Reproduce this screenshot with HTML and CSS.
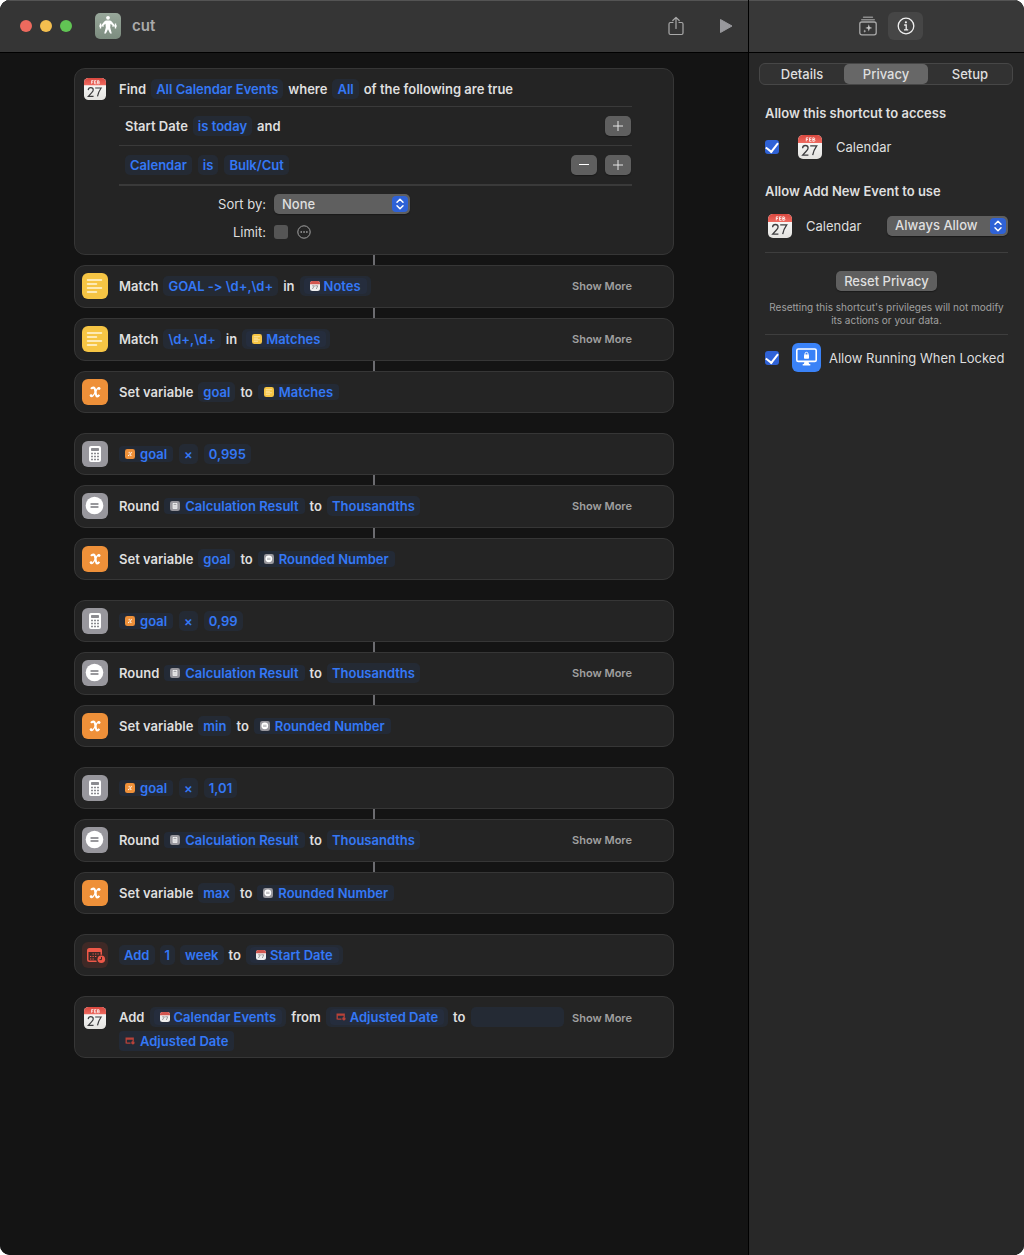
FILE: index.html
```html
<!DOCTYPE html>
<html lang="en">
<head>
<meta charset="utf-8">
<meta name="viewport" content="width=device-width, initial-scale=1">
<title>cut</title>
<link rel="stylesheet" href="styles.css">
</head>
<body>
<svg class="defs" aria-hidden="true">
  <defs>
    <linearGradient id="paper" x1="0" y1="0" x2="0" y2="1"><stop offset="0" stop-color="#fff"/><stop offset="1" stop-color="#e4e3e0"/></linearGradient>
    <linearGradient id="red" x1="0" y1="0" x2="0" y2="1"><stop offset="0" stop-color="#d9483f"/><stop offset="1" stop-color="#ee6a60"/></linearGradient>
    <linearGradient id="sage" x1="0" y1="0" x2="0" y2="1"><stop offset="0" stop-color="#98a79a"/><stop offset="1" stop-color="#7c8c7f"/></linearGradient>
  </defs>
  <symbol id="calendar" viewBox="0 0 24 24">
    <rect width="24" height="24" rx="5" fill="url(#paper)"/>
    <path d="M0 8V5a5 5 0 0 1 5-5h14a5 5 0 0 1 5 5v3z" fill="url(#red)"/>
    <path d="M8.3 6.3V2.8h2M8.3 4.5h1.7M13.5 2.8h-2v3.5h2M11.5 4.5h1.8M14.8 2.8v3.5h1.2a.9.9 0 0 0 0-1.8h-1.2 1a.8.8 0 0 0 0-1.7z" fill="none" stroke="#fff" stroke-width=".8"/>
    <path d="M4.600 13.200c.1-1.700 1.200-2.700 2.800-2.700 1.500 0 2.700 1 2.700 2.500 0 1.200-.7 2-1.900 3.200l-3.500 3.900h5.700M12.200 10.900h6.500c-2 2.800-3.300 5.500-4 9.200" fill="none" stroke="#3d3d3f" stroke-width="1.300"/>
  </symbol>
  <symbol id="text" viewBox="0 0 26 26">
    <rect width="26" height="26" rx="6" fill="#f6c544"/>
    <path d="M5.500 7h14M5.500 11h9M5.500 15h14M5.500 19h9" stroke="#fff6dc" stroke-width="1.500" stroke-linecap="round"/>
  </symbol>
  <symbol id="variable" viewBox="0 0 26 26">
    <rect width="26" height="26" rx="6" fill="#ee9039"/>
    <path d="M9 9.900c.7-.9 1.500-1.300 2.300-1.300 1.500 0 1.900 1.600 2.200 4.200.3 2.700.5 4.600 1.700 4.600.8 0 1.500-.7 2-1.700" fill="none" stroke="#fff" stroke-width="2.200"/>
    <path d="M17.500 9c-1.300-.9-2.500.8-4 3.800-1.700 3.400-3.300 5.500-4.900 4.400" fill="none" stroke="#fff" stroke-width="1.300"/>
    <circle cx="17.100" cy="9.600" r="1.400" fill="#fff"/><circle cx="9.100" cy="16.600" r="1.400" fill="#fff"/>
  </symbol>
  <symbol id="calculator" viewBox="0 0 26 26">
    <rect width="26" height="26" rx="6" fill="#98979d"/>
    <rect x="7" y="5" width="12" height="16" rx="2" fill="#fff"/>
    <rect x="9" y="7" width="8" height="3" rx=".7" fill="#8b8b90"/>
    <path d="M9 12.500h8M9 15.500h8M9 18.500h2M12 18.500h5" stroke="#8b8b90" stroke-width="1.600" stroke-dasharray="2 1"/>
  </symbol>
  <symbol id="round" viewBox="0 0 26 26">
    <rect width="26" height="26" rx="6" fill="#98979d"/>
    <circle cx="12.500" cy="12.500" r="8.800" fill="#fff"/>
    <path d="M9 11h7M9 14h7" stroke="#77777c" stroke-width="1.300" stroke-linecap="round"/>
  </symbol>
  <symbol id="adjust" viewBox="0 0 26 26">
    <rect width="26" height="26" rx="6" fill="#3f2926"/>
    <path fill-rule="evenodd" d="M7.500 6h10A2.500 2.500 0 0 1 20 8.500v4.200a4.800 4.800 0 0 0-1.500.1V10h-12v7.500a1 1 0 0 0 1 1h6.800q.1.800.5 1.500H7.500A2.500 2.500 0 0 1 5 17.500v-9A2.500 2.500 0 0 1 7.500 6z" fill="#ee5848"/>
    <path d="M10.500 12h7M8 14.500h7.500M8 17h5" stroke="#ee5848" stroke-width="1.200" stroke-dasharray="1.300 1.200"/>
    <circle cx="19.300" cy="17.300" r="3.800" fill="#ee5848"/>
    <path d="M19.500 15v2.600h-2" fill="none" stroke="#3f2926" stroke-width="1"/>
  </symbol>
  <symbol id="mini-calendar" viewBox="0 0 10 10">
    <rect width="10" height="10" rx="2.500" fill="#eee"/><path d="M0 3.200V2.500A2.500 2.500 0 0 1 2.500 0h5A2.500 2.500 0 0 1 10 2.500v.7z" fill="#d2564f"/>
    <path d="M2.200 4.800h2.200L2.400 8M5.300 4.800h2.500L6.300 8" fill="none" stroke="#888" stroke-width=".8"/>
  </symbol>
  <symbol id="mini-adjust" viewBox="0 0 10 10">
    <path d="M1.200 7.500V2.200h7V5M1 3h7M1.500 7.200h4" fill="none" stroke="#b84239" stroke-width="1.300"/><circle cx="7.900" cy="6.800" r="1.700" fill="#b84239"/>
  </symbol>
</svg>

<div class="window">
  <main class="editor">
    <header class="toolbar">
      <div class="lights"><span class="light light-close"></span><span class="light light-min"></span><span class="light light-zoom"></span></div>
      <svg class="app-icon" viewBox="0 0 26 26" aria-hidden="true">
        <rect width="26" height="26" rx="5" fill="url(#sage)"/>
        <circle cx="13" cy="4.800" r="1.900" fill="#fff"/>
        <path d="M10.800 7.500h4.400l1.500 1 3 3.800-1 1-3.200-2.600-.3 3.800 1.600 6h-1.700L13 16.300l-2.100 4.200H9.200l1.600-6-.3-3.800-3.200 2.600-1-1 3-3.800z" fill="#fff"/>
        <path d="M4 13h5M17 13h5" stroke="#fff"/>
        <path d="M5.500 10.500v5M20.500 10.500v5" stroke="#fff" stroke-width="1.400"/>
      </svg>
      <h1 class="title">cut</h1>
      <button class="tool tool-share" aria-label="Share"><svg width="16" height="20" viewBox="0 0 16 20"><path d="M5 6.500H2.500A1.500 1.500 0 0 0 1 8v9a1.500 1.500 0 0 0 1.500 1.500h11A1.500 1.500 0 0 0 15 17V8a1.500 1.500 0 0 0-1.500-1.500H11M8 12.500V1.500M4.800 4.500 8 1.300l3.200 3.200" fill="none" stroke="#a9a9a9" stroke-width="1.200" stroke-linecap="round" stroke-linejoin="round"/></svg></button>
      <button class="tool" aria-label="Run"><svg width="14" height="16" viewBox="0 0 14 16"><path d="M1.500 1.500v13L13 8z" fill="#98989c" stroke="#98989c" stroke-linejoin="round"/></svg></button>
    </header>

    <div class="canvas">
      <section class="card find">
        <svg class="icon icon-calendar"><use href="#calendar"/></svg>
        <div class="find-body">
          <div class="find-head line"><span>Find</span><a href="#" class="pill">All Calendar Events</a><span>where</span><a href="#" class="pill">All</a><span>of the following are true</span></div>
          <div class="filter"><div class="line"><span>Start Date</span><a href="#" class="pill">is today</a><span>and</span></div><button class="push square" aria-label="Add filter"><svg width="12" height="12"><path d="M1 6h10M6 1v10" stroke="#e6e6e6"/></svg></button></div>
          <div class="filter"><div class="line pills"><a href="#" class="pill">Calendar</a><a href="#" class="pill">is</a><a href="#" class="pill">Bulk/Cut</a></div><button class="push square" aria-label="Remove filter"><svg width="12" height="12"><path d="M1 5.500h10" stroke="#fff"/></svg></button><button class="push square" aria-label="Add filter"><svg width="12" height="12"><path d="M1 6h10M6 1v10" stroke="#e6e6e6"/></svg></button></div>
          <div class="options">
            <label for="sort">Sort by:</label>
            <span class="popup"><select id="sort"><option>None</option></select><svg class="stepper" viewBox="0 0 16 16"><path d="m5 6.300 3-3 3 3M5 9.700l3 3 3-3" /></svg></span>
            <label for="limit">Limit:</label>
            <span class="limit"><input type="checkbox" id="limit" class="check"><button class="more" aria-label="More"><svg width="14" height="14" viewBox="0 0 14 14"><circle cx="7" cy="7" r="6.200" fill="none" stroke="#a3a3a3"/><path d="M3.500 7h1.500M6.300 7h1.500M9.100 7h1.500" stroke="#a3a3a3" stroke-width="1.400"/></svg></button></span>
          </div>
        </div>
      </section>
      <i class="link"></i>
      <section class="card tall">
        <svg class="icon"><use href="#text"/></svg>
        <div class="line"><span>Match</span><a href="#" class="pill">GOAL -&gt; \d+,\d+</a><span>in</span><span class="pill nest"><a href="#" class="token"><svg class="mini"><use href="#mini-calendar"/></svg>Notes</a></span></div>
        <button class="show">Show More</button>
      </section>
      <i class="link"></i>
      <section class="card tall">
        <svg class="icon"><use href="#text"/></svg>
        <div class="line"><span>Match</span><a href="#" class="pill">\d+,\d+</a><span>in</span><span class="pill nest"><a href="#" class="token"><svg class="mini"><use href="#text"/></svg>Matches</a></span></div>
        <button class="show">Show More</button>
      </section>
      <i class="link"></i>
      <section class="card">
        <svg class="icon"><use href="#variable"/></svg>
        <div class="line"><span>Set variable</span><a href="#" class="pill">goal</a><span>to</span><a href="#" class="token"><svg class="mini"><use href="#text"/></svg>Matches</a></div>
      </section>

      <section class="card first">
        <svg class="icon"><use href="#calculator"/></svg>
        <div class="line pills"><a href="#" class="token"><svg class="mini"><use href="#variable"/></svg>goal</a><a href="#" class="pill">×</a><a href="#" class="pill">0,995</a></div>
      </section>
      <i class="link"></i>
      <section class="card tall">
        <svg class="icon"><use href="#round"/></svg>
        <div class="line"><span>Round</span><a href="#" class="token"><svg class="mini"><use href="#calculator"/></svg>Calculation Result</a><span>to</span><a href="#" class="pill">Thousandths</a></div>
        <button class="show">Show More</button>
      </section>
      <i class="link"></i>
      <section class="card">
        <svg class="icon"><use href="#variable"/></svg>
        <div class="line"><span>Set variable</span><a href="#" class="pill">goal</a><span>to</span><a href="#" class="token"><svg class="mini"><use href="#round"/></svg>Rounded Number</a></div>
      </section>

      <section class="card first">
        <svg class="icon"><use href="#calculator"/></svg>
        <div class="line pills"><a href="#" class="token"><svg class="mini"><use href="#variable"/></svg>goal</a><a href="#" class="pill">×</a><a href="#" class="pill">0,99</a></div>
      </section>
      <i class="link"></i>
      <section class="card tall">
        <svg class="icon"><use href="#round"/></svg>
        <div class="line"><span>Round</span><a href="#" class="token"><svg class="mini"><use href="#calculator"/></svg>Calculation Result</a><span>to</span><a href="#" class="pill">Thousandths</a></div>
        <button class="show">Show More</button>
      </section>
      <i class="link"></i>
      <section class="card">
        <svg class="icon"><use href="#variable"/></svg>
        <div class="line"><span>Set variable</span><a href="#" class="pill">min</a><span>to</span><a href="#" class="token"><svg class="mini"><use href="#round"/></svg>Rounded Number</a></div>
      </section>

      <section class="card first">
        <svg class="icon"><use href="#calculator"/></svg>
        <div class="line pills"><a href="#" class="token"><svg class="mini"><use href="#variable"/></svg>goal</a><a href="#" class="pill">×</a><a href="#" class="pill">1,01</a></div>
      </section>
      <i class="link"></i>
      <section class="card tall">
        <svg class="icon"><use href="#round"/></svg>
        <div class="line"><span>Round</span><a href="#" class="token"><svg class="mini"><use href="#calculator"/></svg>Calculation Result</a><span>to</span><a href="#" class="pill">Thousandths</a></div>
        <button class="show">Show More</button>
      </section>
      <i class="link"></i>
      <section class="card">
        <svg class="icon"><use href="#variable"/></svg>
        <div class="line"><span>Set variable</span><a href="#" class="pill">max</a><span>to</span><a href="#" class="token"><svg class="mini"><use href="#round"/></svg>Rounded Number</a></div>
      </section>

      <section class="card first">
        <svg class="icon"><use href="#adjust"/></svg>
        <div class="line"><a href="#" class="pill">Add</a><a href="#" class="pill">1</a><a href="#" class="pill">week</a><span>to</span><span class="pill nest"><a href="#" class="token"><svg class="mini"><use href="#mini-calendar"/></svg>Start Date</a></span></div>
      </section>

      <section class="card first double">
        <svg class="icon icon-calendar"><use href="#calendar"/></svg>
        <div class="line wrap"><span>Add</span><span class="pill nest"><a href="#" class="token"><svg class="mini"><use href="#mini-calendar"/></svg>Calendar Events</a></span><span>from</span><span class="pill nest"><a href="#" class="token"><svg class="mini"><use href="#mini-adjust"/></svg>Adjusted Date</a></span><span>to</span><span class="pill rest"></span><a href="#" class="token"><svg class="mini"><use href="#mini-adjust"/></svg>Adjusted Date</a></div>
        <button class="show">Show More</button>
      </section>
    </div>
  </main>

  <aside class="side">
    <header class="toolbar side-bar">
      <button class="tool tool-side" aria-label="Action library"><svg width="18" height="20" viewBox="0 0 18 20"><path d="M4.500 1.200h9M2.700 3.700h12.600" stroke="#8c8c8c" stroke-width="1.400" stroke-linecap="round"/><rect x=".8" y="6" width="16.400" height="12.800" rx="2" fill="none" stroke="#a9a9a9" stroke-width="1.300"/><path d="M9.800 8.300l.9 2.700 2.700.9-2.700.9-.9 2.700-.9-2.700-2.700-.9 2.700-.9zM5.800 13.500l.4 1.200 1.200.4-1.200.4-.4 1.200-.4-1.200-1.200-.4 1.200-.4z" fill="#c5c5c5"/></svg></button>
      <button class="tool tool-side active" aria-label="Details"><svg width="18" height="18" viewBox="0 0 18 18"><circle cx="9" cy="9" r="7.800" fill="none" stroke="#f0f0f0" stroke-width="1.300"/><circle cx="8.900" cy="5.300" r="1.100" fill="#f0f0f0"/><path d="M7.200 8h2v4.700M7 12.800h4.200" fill="none" stroke="#f0f0f0" stroke-width="1.300"/></svg></button>
    </header>
    <nav class="tabs"><button class="tab">Details</button><button class="tab selected">Privacy</button><button class="tab">Setup</button></nav>
    <div class="panel">
      <h2>Allow this shortcut to access</h2>
      <label class="row access"><input type="checkbox" class="check" checked><svg class="cal"><use href="#calendar"/></svg><span>Calendar</span></label>
      <h2>Allow Add New Event to use</h2>
      <div class="row event"><svg class="cal"><use href="#calendar"/></svg><label for="allow">Calendar</label><span class="popup wide"><select id="allow"><option>Always Allow</option></select><svg class="stepper" viewBox="0 0 16 16"><path d="m5 6.300 3-3 3 3M5 9.700l3 3 3-3"/></svg></span></div>
      <div class="reset"><button class="push">Reset Privacy</button><p>Resetting this shortcut's privileges will not modify its actions or your data.</p></div>
      <label class="row locked"><input type="checkbox" class="check" checked><svg class="screen" viewBox="0 0 29 29"><rect width="29" height="29" rx="6" fill="#3a82f7"/><rect x="4.800" y="6" width="19.400" height="12.400" rx="1.500" fill="none" stroke="#fff" stroke-width="1.600"/><path d="M12.500 18.500h4l.6 2.500h1.200v1.500h-7.600V21h1.200z" fill="#fff"/><rect x="12" y="11.600" width="5" height="4.200" rx=".8" fill="#fff"/><path d="M13 12v-1.200a1.500 1.500 0 0 1 3 0V12" fill="none" stroke="#fff"/></svg><span>Allow Running When Locked</span></label>
    </div>
  </aside>
</div>
</body>
</html>
```
FILE: styles.css
```css
* { box-sizing: border-box; }
body { margin: 0; background: #fff; font: 13px/16px Inter, "Liberation Sans", sans-serif; font-feature-settings: "calt" 0; color: #dfdfdf; }
button, select, input { margin: 0; font: inherit; font-feature-settings: inherit; color: inherit; }
button { border: 0; padding: 0; background: none; }
button svg { display: block; }
a { text-decoration: none; }
h1, h2, p { margin: 0; }
.defs { display: block; width: 0; height: 0; position: absolute; }

.window { display: flex; min-height: 100vh; border-radius: 10px; overflow: hidden; background: #000; }
.editor { flex: 1; min-width: 0; background: #141414; }
.side { width: 276px; border-left: 1px solid #000; background: #282828; }

.toolbar { display: flex; align-items: center; height: 53px; border-top: 1px solid #545454; border-bottom: 1px solid #000; background: #353535; padding: 0 15px 2px 20px; }
.lights { display: flex; gap: 8px; margin-right: 23px; }
.light { width: 12px; height: 12px; border-radius: 50%; }
.light-close { background: #ed6a5e; }
.light-min { background: #f4bf4f; }
.light-zoom { background: #61c554; }
.app-icon { width: 26px; height: 26px; margin-right: 11px; }
.title { flex: 1; font-size: 15px; line-height: 20px; font-weight: 600; color: #aaa; }
.tool { display: flex; align-items: center; justify-content: center; }
.tool-share { margin-right: 35px; }
.side-bar { justify-content: center; gap: 3px; padding: 0 0 2px; background: #383838; }
.tool-side { width: 35px; height: 28px; border-radius: 6px; }
.active { background: #464646; }

.canvas { display: flex; flex-direction: column; align-items: center; padding: 15px 74px 60px; }
.card { display: flex; align-items: center; width: 100%; max-width: 600px; min-height: 42px; padding: 0 41px 0 7px; border: 1px solid #363636; border-radius: 11px; background: #242424; font-weight: 600; }
.tall { min-height: 43px; padding-bottom: 2px; }
.first { margin-top: 20px; }
.link { width: 2px; height: 10px; background: #6c6c70; }
.icon { flex: none; width: 26px; height: 26px; margin-right: 11px; }
.icon-calendar { width: 22px; height: 22px; margin: 0 13px 0 2px; }
.line { flex: 1; display: flex; align-items: center; gap: 5px; white-space: nowrap; }
.pills { gap: 6px; }
.pill, .token { display: flex; align-items: center; height: 20px; padding: 0 5px; border-radius: 5px; background: #242a34; color: #3478f6; }
.token { height: 16px; padding: 0 6px; border-radius: 4px; background: #232a36; }
.nest { padding: 0 4px; }
.nest .token { background: #252d3d; }
.mini { width: 10px; height: 10px; margin-right: 5px; }
.nest .mini { margin-right: 4px; }
.show { font-size: 11px; font-weight: 600; color: #a0a0a0; }

.find { align-items: flex-start; min-height: 187px; padding-top: 9px; }
.find-body { flex: 1; }
.find-head { height: 28px; padding-bottom: 6px; }
.filter { display: flex; align-items: center; gap: 8px; height: 39px; padding: 0 1px 0 6px; border-top: 1px solid #3a3a3a; }
.options { display: grid; grid-template-columns: 147px 1fr; gap: 10px 8px; padding-top: 8px; border-top: 2px solid #3a3a3a; font-weight: 400; align-items: center; }
.options label { text-align: right; }
.limit { display: flex; align-items: center; gap: 9px; }

.push { height: 20px; padding: 0 8px 1px; border-radius: 5px; background: #5f5f5f; box-shadow: 0 1px 1px #1a1a1a; font-weight: 500; }
.square { display: flex; align-items: center; justify-content: center; width: 26px; padding: 0; }
.popup { display: block; position: relative; width: 136px; height: 20px; }
.popup select { display: block; width: 100%; height: 20px; padding: 0 24px 1px 8px; border: 0; border-radius: 5px; background: #5f5f5f; box-shadow: 0 1px 1px #1a1a1a; appearance: none; font-weight: 500; }
.stepper { position: absolute; top: 2px; right: 2px; width: 16px; height: 16px; border-radius: 4px; background: #2f62d6; fill: none; stroke: #fff; stroke-width: 1.5; stroke-linecap: round; stroke-linejoin: round; pointer-events: none; }
.wide { width: 121px; margin-left: auto; }
.check { display: grid; place-items: center; flex: none; width: 14px; height: 14px; border-radius: 3px; background: #555; appearance: none; }
.check:checked { background: #2f62d6; }
.check:checked::before { content: ""; width: 6px; height: 10px; margin-bottom: 2px; border: solid #fff; border-width: 0 2px 2px 0; transform: rotate(38deg); }

.double { align-items: flex-start; min-height: 62px; padding-top: 10px; padding-bottom: 5px; }
.double .show { padding-top: 3px; }
.wrap { flex-wrap: wrap; row-gap: 4px; }
.rest { flex: 1; margin-right: 8px; }
.wrap > .token { height: 20px; }

.tabs { display: flex; height: 22px; margin: 10px 11px 0 10px; border: 1px solid #474747; border-radius: 6px; background: #323232; }
.tab { flex: 1; padding-bottom: 1px; border-radius: 5px; font-weight: 500; }
.selected { background: #676767; }
.panel { padding: 20px 16px; }
.panel h2 { font-size: 13px; line-height: 16px; font-weight: 600; }
.row { display: flex; align-items: center; }
.cal { width: 24px; height: 24px; }
.access { height: 52px; margin-bottom: 10px; }
.access .cal { margin: 0 14px 0 19px; }
.event { height: 54px; padding-left: 3px; border-bottom: 1px solid #3e3e3e; }
.event .cal { margin-right: 14px; }
.reset { padding: 18px 0 7px; border-bottom: 1px solid #3e3e3e; text-align: center; }
.reset p { padding-top: 10px; font-size: 10px; line-height: 13px; color: #a0a0a0; }
.locked { height: 45px; }
.screen { width: 29px; height: 29px; margin: 0 8px 0 13px; }
```
